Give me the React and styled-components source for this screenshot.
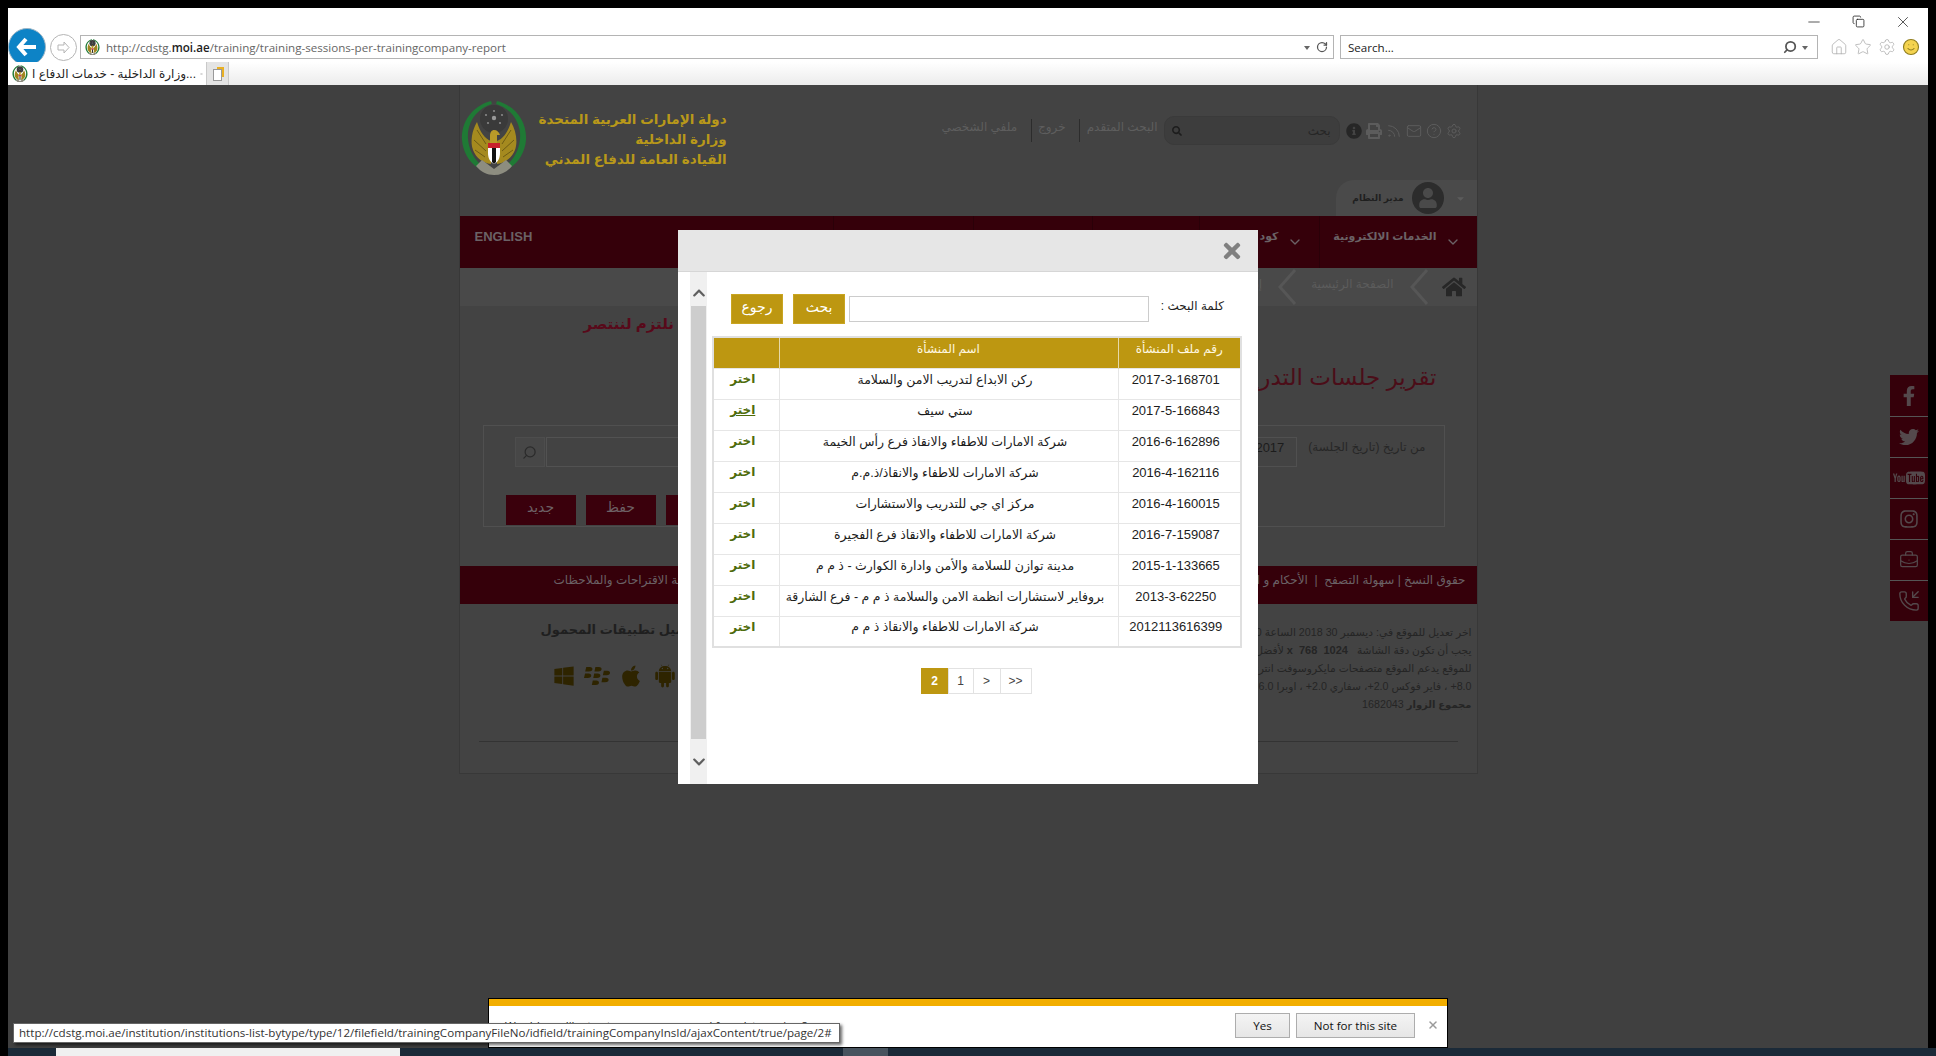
import React from 'react';
import styled, { createGlobalStyle } from 'styled-components';
import { FaTimes, FaChevronUp, FaChevronDown, FaFacebookF, FaTwitter, FaInstagram, FaWindows, FaBlackberry, FaApple, FaHome, FaSearch, FaInfoCircle, FaPrint, FaUser, FaCaretDown } from 'react-icons/fa';
import { AiFillAndroid } from 'react-icons/ai';
import { ImYoutube2 } from 'react-icons/im';
import { Rss, Mail, CircleHelp, Settings, BriefcaseBusiness, PhoneIncoming, ChevronDown, Home, Star, RotateCw, Search, X, Minus, Copy, Smile } from 'lucide-react';

const ARABIC = '"Liberation Sans", "DejaVu Sans", sans-serif';

const GlobalStyle = createGlobalStyle`
  html, body { margin: 0; padding: 0; background: #000; }
  body { font-family: ${ARABIC}; font-size: 13px; }
  * { box-sizing: border-box; }
`;

const Stage = styled.div`
  position: relative;
  width: 1936px;
  height: 1056px;
  padding: 8px 8px 0;
  background: #000;
  display: flex;
  flex-direction: column;
  overflow: hidden;
`;

/* browser chrome */
const Chrome = styled.div`
  height: 77px;
  flex: none;
  background: linear-gradient(#fff 70%, #ececec);
  display: flex;
  flex-direction: column;
`;
const WindowButtons = styled.div`
  height: 27px;
  display: flex;
  justify-content: flex-end;
  align-items: center;
  gap: 29px;
  padding: 0 16px 0 0;
  color: #222;
`;
const AddressRow = styled.div`
  height: 24px;
  display: flex;
  align-items: center;
`;
const BackButton = styled.div`
  width: 38px;
  height: 38px;
  margin: 0;
  flex: none;
  border-radius: 50%;
  background: #0d83c6;
  border: 1px solid #9db6c6;
  display: flex;
  align-items: center;
  justify-content: center;
`;
const ForwardButton = styled.div`
  width: 27px;
  height: 27px;
  margin: 0 3px 0 4px;
  flex: none;
  border-radius: 50%;
  border: 1px solid #b5b5b5;
  display: flex;
  align-items: center;
  justify-content: center;
`;
const Field = styled.div`
  height: 24px;
  flex: ${p => p.$grow ? 1 : 'none'};
  width: ${p => p.$width || 'auto'};
  margin-left: ${p => p.$gap || 0};
  border: 1px solid #b4b4b4;
  background: #fff;
  display: flex;
  align-items: center;
  padding: 0 ${p => p.$right || 4}px 0 ${p => p.$left || 4}px;
  gap: ${p => p.$inner || 4}px;
  font: 11.6px "Open Sans", sans-serif;
  color: #666;
  white-space: nowrap;
`;
const Spacer = styled.span`
  flex: 1;
`;
const Caret = styled.span`
  width: 0;
  height: 0;
  border: 3px solid transparent;
  border-top: 4px solid #666;
  margin-top: 4px;
`;
const ToolIcons = styled.div`
  width: 110px;
  flex: none;
  display: flex;
  justify-content: flex-end;
  align-items: center;
  gap: 6px;
  padding-right: 8px;
  color: #aaa;
`;
const TabRow = styled.div`
  height: 23px;
  margin-top: 3px;
  display: flex;
  position: relative;
`;
const Tab = styled.div`
  width: 199px;
  background: #fff;
  border: 1px solid #c9c9c9;
  border-width: 0 1px 0 0;
  display: flex;
  align-items: center;
  padding: 0 3px 0 4px;
  gap: 4px;
  font: 12px ${ARABIC};
  color: #222;
  white-space: nowrap;
`;
const TabTitle = styled.span`
  flex: 1;
  direction: ltr;
`;
const NewTab = styled.div`
  width: 22px;
  background: #e4e4e4;
  border-right: 1px solid #c9c9c9;
  display: flex;
  align-items: center;
  justify-content: center;
`;
const NewTabSheet = styled.div`
  width: 9px;
  height: 12px;
  margin-top: 3px;
  background: #fff;
  border: 1px solid #999;
  box-shadow: 3px -3px 0 -1px #e9b023;
`;

/* dimmed site behind the dialog */
const Main = styled.div`
  flex: 1;
  min-height: 0;
  background: #404040;
`;
const Site = styled.div`
  width: 1019px;
  height: 689px;
  margin: 0 auto;
  background: #434343;
  border: 1px solid #383838;
  border-top: 0;
  display: flex;
  flex-direction: column;
`;
const Header = styled.header`
  height: 131px;
  flex: none;
  display: flex;
  justify-content: space-between;
`;
const Brand = styled.div`
  display: flex;
  gap: 11px;
  padding-top: 15px;
  align-items: flex-start;
`;
const BrandText = styled.div`
  direction: rtl;
  text-align: right;
  color: #b8981a;
  font: bold 13.5px/20px ${ARABIC};
  padding-top: 10px;
`;
const HeaderRight = styled.div`
  display: flex;
  flex-direction: column;
  align-items: flex-end;
  justify-content: space-between;
  padding-top: 31px;
`;
const Tools = styled.div`
  direction: rtl;
  display: flex;
  align-items: center;
  padding-right: 15px;
  color: #5c5c5c;
`;
const ToolSet = styled.div`
  display: flex;
  align-items: center;
  gap: 4px;
  margin-left: 6px;
`;
const SearchBox = styled.div`
  width: 176px;
  height: 29px;
  background: #3d3d3d;
  border: 1px solid #3a3a3a;
  border-radius: 10px;
  display: flex;
  align-items: center;
  justify-content: space-between;
  padding: 0 8px 0 7px;
  color: #262626;
  font-size: 12px;
`;
const TopLink = styled.a`
  padding: 0 ${p => p.$start}px 0 ${p => p.$end}px;
  height: 23px;
  line-height: 16px;
  font-size: 12px;
  color: #5e5e5e;
  border-left: ${p => p.$line ? '1px solid #2c2c2c' : 0};
`;
const UserTab = styled.div`
  width: 141px;
  height: 36px;
  background: #4a4a4a;
  border-radius: 18px 0 0 0;
  display: flex;
  align-items: center;
  direction: rtl;
  padding-right: 11px;
  gap: 8px;
  color: #1f1f1f;
  font: bold 9px ${ARABIC};
`;
const Avatar = styled.div`
  width: 32px;
  height: 32px;
  margin-right: 3px;
  border-radius: 50%;
  background: #2c2c2c;
  color: #4a4a4a;
  display: flex;
  align-items: center;
  justify-content: center;
  overflow: hidden;
`;
const NavBar = styled.nav`
  height: 52px;
  flex: none;
  background: #35000a;
  direction: rtl;
  display: flex;
  color: #6b6266;
  font: bold 11px ${ARABIC};
`;
const NavItem = styled.div`
  width: ${p => p.$width}px;
  flex: none;
  display: flex;
  gap: 8px;
  align-items: flex-start;
  padding: 14px 16px 0 0;
  border-left: 1px solid #2a0008;
  white-space: nowrap;
  svg { flex: none; margin-top: 4px; }
`;
const NavEnglish = styled.div`
  flex: 1;
  padding: 13px 0 0 15px;
  direction: ltr;
  font: bold 13px "Liberation Sans", sans-serif;
`;
const Crumbs = styled.div`
  height: 38px;
  flex: none;
  background: #494949;
  direction: rtl;
  display: flex;
  align-items: center;
  padding-right: 11px;
  color: #5c5c5c;
  font-size: 12px;
`;
const HomeMark = styled.div`
  color: #272727;
  display: flex;
`;
const Crumb = styled.span`
  margin: -6px 0 0 0;
  padding: 0 15px 0 14px;
  white-space: nowrap;
`;
const CrumbArrow = styled.svg`
  width: 20px;
  height: 36px;
  flex: none;
  margin-right: ${p => p.$gap || 0}px;
`;
const Body = styled.main`
  height: 260px;
  flex: none;
  display: flex;
  flex-direction: column;
`;
const Slogan = styled.div`
  padding: 4px 0 0 124px;
  height: 40px;
  direction: ltr;
  color: #58091a;
  font: bold 15px/28px ${ARABIC};
`;
const PageTitle = styled.h1`
  margin: 0;
  height: 79px;
  padding: 14px 40px 0 0;
  direction: rtl;
  color: #4b0d18;
  font: normal 23px/34px ${ARABIC};
  white-space: nowrap;
`;
const FilterPanel = styled.section`
  width: 962px;
  height: 102px;
  margin-left: 23px;
  border: 1px solid #505050;
  padding: 11px 0 1px 22px;
  display: flex;
  flex-direction: column;
  justify-content: space-between;
`;
const FilterRow = styled.div`
  display: flex;
  justify-content: space-between;
  padding: 0 0 0 9px;
`;
const SearchGroup = styled.div`
  display: flex;
  gap: 1px;
`;
const SearchAddon = styled.div`
  width: 30px;
  height: 30px;
  background: #474747;
  border: 1px solid #4d4d4d;
  display: flex;
  align-items: center;
  justify-content: center;
  color: #2b2b2b;
`;
const FilterInput = styled.div`
  width: 200px;
  height: 30px;
  border: 1px solid #525252;
  background: #434343;
`;
const DateGroup = styled.div`
  direction: rtl;
  display: flex;
  gap: 11px;
  padding-right: 18px;
  color: #272727;
  font-size: 12px;
  line-height: 20px;
`;
const DateInput = styled.div`
  width: 120px;
  height: 30px;
  border: 1px solid #505050;
  padding: 0 12px;
  direction: ltr;
  text-align: right;
  color: #1c1c1c;
  font: 13px/20px "Liberation Sans", sans-serif;
`;
const ActionRow = styled.div`
  display: flex;
  gap: 10px;
`;
const ActionButton = styled.div`
  width: 70px;
  height: 30px;
  background: #3a000c;
  color: #6d6165;
  font-size: 14px;
  line-height: 24px;
  text-align: center;
`;
const FooterBar = styled.div`
  height: 38px;
  flex: none;
  background: #35000a;
  direction: rtl;
  display: flex;
  justify-content: space-between;
  padding: 4px 11px 0 94px;
  color: #6b6266;
  font-size: 12px;
  line-height: 20px;
  white-space: nowrap;
`;
const FooterCols = styled.div`
  height: 138px;
  flex: none;
  display: flex;
  justify-content: space-between;
  border-bottom: 1px solid #333;
  margin: 0 19px;
  padding-top: 17px;
`;
const AppsBlock = styled.div`
  padding-left: 62px;
`;
const AppsTitle = styled.div`
  direction: rtl;
  color: #1f1f1f;
  font: bold 13px/18px ${ARABIC};
  white-space: nowrap;
`;
const AppIcons = styled.div`
  display: flex;
  align-items: center;
  gap: 9px;
  padding: 24px 0 0 12px;
  color: #2e2400;
`;
const InfoBlock = styled.div`
  direction: rtl;
  text-align: right;
  margin: 2px -14px 0 0;
  color: #252525;
  font-size: 10.7px;
  line-height: 18px;
  width: 240px;
  white-space: nowrap;
`;
const InfoStrong = styled.b`
  font-size: ${p => p.$size || 10}px;
`;

/* overlays */
const Dialog = styled.div`
  position: absolute;
  left: 678px;
  top: 230px;
  width: 580px;
  height: 554px;
  background: #fff;
  display: flex;
  flex-direction: column;
`;
const DialogHead = styled.div`
  height: 42px;
  flex: none;
  background: #e6e6e6;
  border-bottom: 1px solid #d6d6d6;
  display: flex;
  justify-content: flex-end;
  align-items: center;
  padding-right: 14px;
  color: #808080;
`;
const DialogBody = styled.div`
  flex: 1;
  display: flex;
  padding-left: 12px;
`;
const ScrollTrack = styled.div`
  width: 17px;
  flex: none;
  background: #f0f0f0;
  display: flex;
  flex-direction: column;
  align-items: center;
  color: #5f5f5f;
`;
const ScrollArrow = styled.div`
  height: ${p => p.$height}px;
  padding-top: ${p => p.$top || 0}px;
  flex: none;
  display: flex;
  align-items: center;
  justify-content: center;
  font-size: 14px;
`;
const ScrollThumb = styled.div`
  flex: 1;
  width: 15px;
  background: #cdcdcd;
`;
const DialogContent = styled.div`
  flex: 1;
  padding: 22px 16px 0 6px;
  min-width: 0;
`;
const SearchRow = styled.div`
  direction: rtl;
  display: flex;
  align-items: center;
  height: 30px;
  padding-right: 1px;
`;
const SearchLabel = styled.label`
  width: 92px;
  flex: none;
  padding: 0 17px 0 0;
  margin-top: -6px;
  white-space: nowrap;
  color: #222;
  font-size: 12px;
`;
const SearchField = styled.input`
  width: 300px;
  height: 26px;
  border: 1px solid #ccc;
  margin: 0;
  outline: 0;
`;
const GoldButton = styled.button`
  width: ${p => p.$width}px;
  height: 30px;
  margin-right: ${p => p.$gap}px;
  border: 1px solid #c9a521;
  background: #bd9711;
  color: #fff;
  font: 14px ${ARABIC};
  padding: 0 0 4px;
`;
const ResultTable = styled.table`
  width: 530px;
  margin: 12px 0 0 -1px;
  direction: rtl;
  border-collapse: collapse;
  border: 2px solid #e0e0e0;
  table-layout: fixed;
`;
const HeadCell = styled.th`
  height: 31px;
  padding: 0 0 7px;
  background: #bd9711;
  border-left: 1px solid #e6d9a8;
  color: #fff8e0;
  font: 12px ${ARABIC};
  width: ${p => p.$width ? `${p.$width}px` : 'auto'};
`;
const Cell = styled.td`
  height: 31px;
  padding: 0 7px 9px 0;
  border: 1px solid #e6e6e6;
  text-align: center;
  color: #1c1c1c;
  font: 12.5px ${ARABIC};
  white-space: nowrap;
`;
const FileNo = styled.span`
  font: 13px "Liberation Sans", sans-serif;
`;
const Pick = styled.a`
  color: #4e6b0a;
  font-weight: bold;
  font-size: 12px;
  text-decoration: ${p => p.$hover ? 'underline' : 'none'};
`;
const Pager = styled.div`
  display: flex;
  justify-content: center;
  margin: 20px 0 0 0;
  padding-right: 3px;
`;
const PageLink = styled.a`
  width: ${p => p.$width}px;
  height: 26px;
  margin-left: ${p => p.$active ? 0 : -1}px;
  border: 1px solid ${p => p.$active ? '#bd9711' : '#e2e2e2'};
  background: ${p => p.$active ? '#bd9711' : '#fff'};
  color: ${p => p.$active ? '#fff' : '#444'};
  font: ${p => p.$active ? 'bold ' : ''}12px/24px "Liberation Sans", sans-serif;
  text-align: center;
`;
const SocialRail = styled.div`
  position: absolute;
  left: 1890px;
  top: 375px;
  width: 38px;
  display: flex;
  flex-direction: column;
`;
const SocialItem = styled.div`
  height: 41px;
  background: #35000a;
  border-top: ${p => p.$first ? 0 : '1px solid #555'};
  color: #54494c;
  display: flex;
  align-items: center;
  justify-content: center;
`;
const Prompt = styled.div`
  position: absolute;
  left: 488px;
  top: 998px;
  width: 960px;
  height: 50px;
  background: #fff;
  border: 1px solid #000;
  display: flex;
  flex-direction: column;
`;
const PromptStripe = styled.div`
  height: 7px;
  flex: none;
  background: #f2ae00;
`;
const PromptBody = styled.div`
  flex: 1;
  display: flex;
  align-items: center;
  padding: 0 8px 3px 16px;
  font: 11.6px "Open Sans", sans-serif;
  color: #222;
`;
const PromptButton = styled.button`
  width: ${p => p.$width}px;
  height: 25px;
  margin-left: 6px;
  padding: 0;
  background: linear-gradient(#f4f4f4, #e6e6e6);
  border: 1px solid #adadad;
  font: 11.6px "Open Sans", sans-serif;
  color: #111;
`;
const PromptClose = styled.span`
  margin-left: 12px;
  display: flex;
  color: #9a9a9a;
`;
const StatusTip = styled.div`
  position: absolute;
  left: 13px;
  top: 1023px;
  width: 827px;
  height: 20px;
  background: #fff;
  border: 1px solid #666;
  box-shadow: 2px 2px 3px rgba(0,0,0,.6);
  padding: 0 5px;
  font: 11.6px/18px "Open Sans", sans-serif;
  color: #333;
  white-space: nowrap;
  overflow: hidden;
`;
const Taskbar = styled.div`
  height: 8px;
  flex: none;
  margin: 0 -8px 0 0;
  background: #1b2a38;
  display: flex;
  position: relative;
  overflow: hidden;
`;
const TaskSearch = styled.div`
  width: 344px;
  margin-left: 48px;
  background: #f0f0f0;
`;
const TaskActive = styled.div`
  width: 45px;
  margin-left: 443px;
  background: #47535e;
`;
const TaskClock = styled.div`
  position: absolute;
  right: 70px;
  top: 5px;
  font: 11px "Open Sans", sans-serif;
  color: #dfe3e6;
`;

/* emblem drawn as a small svg, used for the logo and the favicons */
const WING = 'M31 41C25 39 20 32 17 22C12 30 10 42 13 50C16 58 23 63 31 64z';
const WREATH = 'M31 1C12 6 1 22 2 40c1 12 7 22 16 28l3-3C11 56 7 44 8 32C10 18 19 8 32 4z';

const Emblem = ({ size = 68 }) => (
  <svg width={size} height={size * 76 / 68} viewBox="0 0 68 76" style={{ flex: 'none' }}>
    <path d={WREATH} fill="#1f7a35" />
    <path d={WREATH} fill="#1f7a35" transform="matrix(-1 0 0 1 68 0)" />
    <circle cx="34" cy="19" r="14" fill="#3a3a3a" />
    <circle cx="34" cy="11" r="1.1" fill="#888" /><circle cx="26" cy="15" r="1.1" fill="#888" /><circle cx="42" cy="15" r="1.1" fill="#888" />
    <circle cx="28" cy="23" r="1.1" fill="#888" /><circle cx="40" cy="23" r="1.1" fill="#888" /><circle cx="34" cy="18" r="2.2" fill="#999" />
    <path d={WING} fill="#a58a1f" />
    <path d={WING} fill="#a58a1f" transform="matrix(-1 0 0 1 68 0)" />
    <path d="M17 30l9 14M14 40l12 11M15 50l10 7M51 30l-9 14M54 40l-12 11M53 50l-10 7" stroke="#6e5c14" strokeWidth="1" />
    <path d="M30 46V36c0-4 2-6 4-6 3 0 5 2 6 5l-3 0v11z" fill="#b89a28" />
    <path d="M16 66c5 6 11 9 18 9s13-3 18-9l-6-6-12 9-12-9z" fill="#8d8d80" />
    <path d="M28 43h12v10c0 5-2 9-6 11-4-2-6-6-6-11z" fill="#fff" />
    <path d="M28 43h12v5H28z" fill="#c8202c" />
    <path d="M32 48h4v14l-2 2-2-2z" fill="#111" />
  </svg>
);

const Chevron = ({ gap }) => (
  <CrumbArrow viewBox="0 0 20 36" $gap={gap}>
    <path d="M18 1 3 18l15 17" fill="none" stroke="#565656" strokeWidth="3" />
  </CrumbArrow>
);

const rows = [
  ['2017-3-168701', 'ركن الابداع لتدريب الامن والسلامة'],
  ['2017-5-166843', 'ستي سيف', true],
  ['2016-6-162896', 'شركة الامارات للاطفاء والانقاذ فرع رأس الخيمة'],
  ['2016-4-162116', 'شركة الامارات للاطفاء والانقاذ/ذ.م.م'],
  ['2016-4-160015', 'مركز اي جي للتدريب والاستشارات'],
  ['2016-7-159087', 'شركة الامارات للاطفاء والانقاذ فرع الفجيرة'],
  ['2015-1-133665', 'مدينة توازن للسلامة والأمن وادارة الكوارث - ذ م م'],
  ['2013-3-62250', 'بروفاير لاستشارات انظمة الامن والسلامة ذ م م - فرع الشارقة'],
  ['2012113616399', 'شركة الامارات للاطفاء والانقاذ ذ م م'],
];

const navItems = [
  ['الخدمات الالكترونية', 158],
  ['كود الدفاع المدني', 120],
  ['إدارة المحتوى', 107],
  ['التقارير', 119],
  ['التدريب', 140],
];

export default function App() {
  return (
    <Stage>
      <GlobalStyle />
      <Chrome>
        <WindowButtons>
          <Minus size={18} strokeWidth={1} />
          <Copy size={13} strokeWidth={1.5} />
          <X size={18} strokeWidth={1} />
        </WindowButtons>
        <AddressRow>
          <BackButton>
            <svg width="22" height="20" viewBox="0 0 22 20"><path d="M10 2 3 10l7 8M3 10h17" fill="none" stroke="#fff" strokeWidth="4" /></svg>
          </BackButton>
          <ForwardButton>
            <svg width="15" height="15" viewBox="0 0 15 15"><path d="M8 2l5 5.500-5 5.500v-3H2V5h6z" fill="none" stroke="#b5b5b5" /></svg>
          </ForwardButton>
          <Field $grow $right={5} $inner={6}>
            <Emblem size={15} />
            <span>http://cdstg.<b style={{ color: '#222', fontWeight: 600 }}>moi.ae</b>/training/training-sessions-per-trainingcompany-report</span>
            <Spacer />
            <Caret />
            <RotateCw size={12} color="#555" strokeWidth={2.5} />
          </Field>
          <Field $width="478px" $gap="6px" $left={7} $right={9} $inner={5}>
            <span style={{ color: '#222' }}>Search...</span>
            <Spacer />
            <Search size={14} color="#555" strokeWidth={3} style={{ transform: 'scaleX(-1)' }} />
            <Caret />
          </Field>
          <ToolIcons>
            <Home size={18} strokeWidth={1} />
            <Star size={18} strokeWidth={1} />
            <Settings size={18} strokeWidth={1} />
            <Smile size={18} strokeWidth={1.5} fill="#f4d34f" color="#8f7d1e" />
          </ToolIcons>
        </AddressRow>
        <TabRow>
          <Tab>
            <Emblem size={16} />
            <TabTitle>وزارة الداخلية - خدمات الدفاع ا...</TabTitle>
            <X size={12} color="#888" strokeWidth={3} />
          </Tab>
          <NewTab><NewTabSheet /></NewTab>
        </TabRow>
      </Chrome>

      <Main>
        <Site>
          <Header>
            <Brand>
              <Emblem />
              <BrandText>
                دولة الإمارات العربية المتحدة<br />
                وزارة الداخلية<br />
                القيادة العامة للدفاع المدني
              </BrandText>
            </Brand>
            <HeaderRight>
              <Tools>
                <ToolSet>
                  <Settings size={16} strokeWidth={1.5} />
                  <CircleHelp size={16} strokeWidth={1.5} />
                  <Mail size={16} strokeWidth={1.5} />
                  <Rss size={16} strokeWidth={1.5} />
                  <FaPrint size={16} />
                  <FaInfoCircle size={16} color="#262626" />
                </ToolSet>
                <SearchBox>
                  بحث
                  <FaSearch size={10} color="#1d1d1d" />
                </SearchBox>
                <TopLink $start={6} $end={7} $line>البحث المتقدم</TopLink>
                <TopLink $start={13} $end={6} $line>خروج</TopLink>
                <TopLink $start={14} $end={0}>ملفي الشخصي</TopLink>
              </Tools>
              <UserTab>
                <FaCaretDown size={11} color="#5c5c5c" />
                <Avatar><FaUser size={20} /></Avatar>
                مدير النظام
              </UserTab>
            </HeaderRight>
          </Header>
          <NavBar>
            {navItems.map(([label, width]) => (
              <NavItem key={label} $width={width}>
                <ChevronDown size={16} />
                {label}
              </NavItem>
            ))}
            <NavEnglish>ENGLISH</NavEnglish>
          </NavBar>
          <Crumbs>
            <HomeMark><FaHome size={24} /></HomeMark>
            <Chevron gap={13} />
            <Crumb>الصفحة الرئيسية</Crumb>
            <Chevron />
            <Crumb>إدارة التدريب</Crumb>
          </Crumbs>
          <Body>
            <Slogan>نلتزم لننتصر</Slogan>
            <PageTitle>تقرير جلسات التدريب لكل شركة تدريب</PageTitle>
            <FilterPanel>
              <FilterRow>
                <SearchGroup>
                  <SearchAddon><Search size={15} strokeWidth={2} style={{ transform: 'scaleX(-1)' }} /></SearchAddon>
                  <FilterInput />
                </SearchGroup>
                <DateGroup>
                  من تاريخ (تاريخ الجلسة)
                  <DateInput>1/1/2017</DateInput>
                </DateGroup>
              </FilterRow>
              <ActionRow>
                <ActionButton>جديد</ActionButton>
                <ActionButton>حفظ</ActionButton>
                <ActionButton>بحث</ActionButton>
              </ActionRow>
            </FilterPanel>
          </Body>
          <FooterBar>
            <span>حقوق النسخ | سهولة التصفح &nbsp;|&nbsp; الأحكام و الشروط</span>
            <span>بوابة الاقتراحات والملاحظات</span>
          </FooterBar>
          <FooterCols>
            <AppsBlock>
              <AppsTitle>تحميل تطبيقات المحمول</AppsTitle>
              <AppIcons>
                <FaWindows size={22} />
                <FaBlackberry size={26} />
                <FaApple size={24} />
                <AiFillAndroid size={26} />
              </AppIcons>
            </AppsBlock>
            <InfoBlock>
              اخر تعديل للموقع في: ديسمبر 30 2018 الساعة 30<br />
              يجب أن تكون دقة الشاشة &nbsp; <InfoStrong $size={11}>1024 &nbsp;x&nbsp; 768</InfoStrong> لأفضل عرض<br />
              للموقع يدعم الموقع متصفحات مايكروسوفت انترنت<br />
              8.0+ ، فاير فوكس 2.0+، سفاري 2.0+ ، اوبرا 6.0<br />
              <InfoStrong>مجموع الزوار</InfoStrong> 1682043
            </InfoBlock>
          </FooterCols>
        </Site>
      </Main>

      <Taskbar>
        <TaskSearch />
        <TaskActive />
        <TaskClock>4:32 PM</TaskClock>
      </Taskbar>

      <SocialRail>
        <SocialItem $first><FaFacebookF size={20} /></SocialItem>
        <SocialItem><FaTwitter size={20} /></SocialItem>
        <SocialItem><ImYoutube2 size={32} /></SocialItem>
        <SocialItem><FaInstagram size={20} /></SocialItem>
        <SocialItem><BriefcaseBusiness size={20} strokeWidth={1.5} /></SocialItem>
        <SocialItem><PhoneIncoming size={22} strokeWidth={1.5} /></SocialItem>
      </SocialRail>

      <Dialog>
        <DialogHead><FaTimes size={24} /></DialogHead>
        <DialogBody>
          <ScrollTrack>
            <ScrollArrow $height={34} $top={8}><FaChevronUp /></ScrollArrow>
            <ScrollThumb />
            <ScrollArrow $height={45}><FaChevronDown /></ScrollArrow>
          </ScrollTrack>
          <DialogContent>
            <SearchRow>
              <SearchLabel>كلمة البحث :</SearchLabel>
              <SearchField />
              <GoldButton $width={52} $gap={4}>بحث</GoldButton>
              <GoldButton $width={52} $gap={10}>رجوع</GoldButton>
            </SearchRow>
            <ResultTable>
              <thead>
                <tr>
                  <HeadCell $width={123}>رقم ملف المنشأة</HeadCell>
                  <HeadCell>اسم المنشأة</HeadCell>
                  <HeadCell $width={66} />
                </tr>
              </thead>
              <tbody>
                {rows.map(([no, name, hover]) => (
                  <tr key={no}>
                    <Cell><FileNo>{no}</FileNo></Cell>
                    <Cell>{name}</Cell>
                    <Cell><Pick $hover={hover}>اختر</Pick></Cell>
                  </tr>
                ))}
              </tbody>
            </ResultTable>
            <Pager>
              <PageLink $active $width={28}>2</PageLink>
              <PageLink $width={26}>1</PageLink>
              <PageLink $width={28}>&gt;</PageLink>
              <PageLink $width={32}>&gt;&gt;</PageLink>
            </Pager>
          </DialogContent>
        </DialogBody>
      </Dialog>

      <Prompt>
        <PromptStripe />
        <PromptBody>
          Would you like to store your password for cdstg.moi.ae?
          <Spacer />
          <PromptButton $width={55}>Yes</PromptButton>
          <PromptButton $width={119}>Not for this site</PromptButton>
          <PromptClose><X size={12} strokeWidth={3} /></PromptClose>
        </PromptBody>
      </Prompt>

      <StatusTip>http://cdstg.moi.ae/institution/institutions-list-bytype/type/12/filefield/trainingCompanyFileNo/idfield/trainingCompanyInsId/ajaxContent/true/page/2#</StatusTip>
    </Stage>
  );
}
